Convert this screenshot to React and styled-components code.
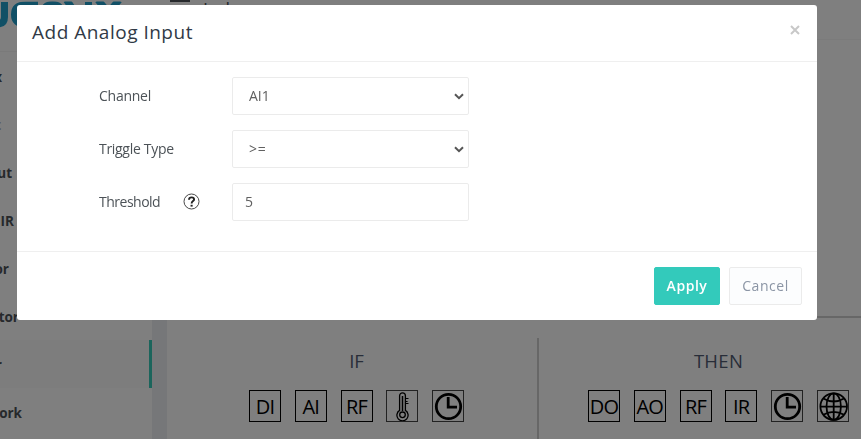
import React from "react";
import styled, { createGlobalStyle } from "styled-components";

const Global = createGlobalStyle`
  *, *::before, *::after { box-sizing: border-box; }
  body {
    margin: 0;
    overflow: hidden;
    background: #fff;
    color: #4c5257;
    font: 14px/20px "Open Sans", "Noto Sans", sans-serif;
  }
`;

const Shell = styled.div`
  display: grid;
  grid-template-columns: 152px 1fr;
  height: 439px;
  overflow: hidden;
`;
const Sidebar = styled.nav`
  display: flex;
  flex-direction: column;
  background: #fff;
`;
const Brand = styled.div`
  height: 52px;
  flex: none;
  border-bottom: 1px solid #f4f4f4;
  overflow: hidden;
  svg { display: block; }
`;
const MenuItem = styled.div`
  height: 48px;
  flex: none;
  display: flex;
  align-items: center;
  justify-content: flex-end;
  padding-top: 2px;
  padding-right: ${(p) => p.$inset}px;
  font-size: 13.5px;
  font-weight: 700;
  white-space: nowrap;
  color: ${(p) => (p.$soft ? "#adb1b6" : "#4d5258")};
  background: ${(p) => (p.$active ? "#fafafa" : "#fff")};
  border-right: 3px solid ${(p) => (p.$active ? "#36cbb8" : "transparent")};
`;
const Main = styled.main`
  display: flex;
  flex-direction: column;
  min-width: 0;
`;
const TopBar = styled.header`
  height: 40px;
  flex: none;
  border-bottom: 1px solid #f6f6f6;
  padding-left: 18px;
  display: flex;
  align-items: flex-start;
  gap: 13px;
`;
const Bar = styled.i`
  width: 20px;
  height: 2px;
  background: #4d5258;
`;
const PageTitle = styled.span`
  font-size: 18px;
  line-height: 24px;
  margin-top: -3px;
`;
const Content = styled.div`
  flex: 1;
  padding-left: 15px;
  background: #eceff2;
`;
const Card = styled.section`
  height: 100%;
  background: #fff;
  padding-top: 276px;
  border-bottom: 1px solid #f5eff2;
`;
const Panels = styled.div`
  display: grid;
  grid-template-columns: 370px 1fr;
  border-top: 2px solid #cfcfcf;
  padding-top: 20px;
`;
const Panel = styled.div`
  height: 110px;
  padding: 12px 0 0 ${(p) => p.$start}px;
  border-left: ${(p) => (p.$ruled ? "2px solid #cfcfcf" : "0")};
`;
const PanelTitle = styled.h3`
  margin: 0;
  width: ${(p) => p.$width}px;
  text-align: center;
  font-weight: 400;
  font-size: 18.5px;
  line-height: 22px;
  letter-spacing: ${(p) => p.$track || 0}px;
  color: #505b72;
`;
const Tiles = styled.div`
  display: flex;
  gap: 13.75px;
  margin-top: 18px;
`;
const Tile = styled.div`
  width: 32px;
  height: 32px;
  flex: none;
  display: flex;
  align-items: center;
  justify-content: center;
  padding-top: ${(p) => (p.$icon ? 0 : 2)}px;
  border: 1px solid ${(p) => (p.$icon ? "#444" : "#000")};
  color: #000;
  font: 500 20px/28px "Open Sans", "Noto Sans", sans-serif;
  letter-spacing: -0.8px;
  svg { display: block; flex: none; }
`;
const Backdrop = styled.div`
  position: fixed;
  inset: 0;
  background: rgba(0, 0, 0, 0.5);
`;
const Dialog = styled.div`
  position: absolute;
  left: 17px;
  top: 5px;
  width: 800px;
  height: 315px;
  display: flex;
  flex-direction: column;
  background: #fff;
  border-radius: 3px;
`;
const DialogHeader = styled.header`
  height: 57px;
  flex: none;
  display: flex;
  align-items: center;
  justify-content: space-between;
  padding: 0 17px 2px 15px;
  border-bottom: 1px solid #efefef;
`;
const DialogTitle = styled.h2`
  margin: 0;
  font-size: 19px;
  line-height: 26px;
  font-weight: 400;
  letter-spacing: 0.5px;
  color: #313a46;
`;
const Close = styled.button`
  border: 0;
  padding: 0;
  background: none;
  display: flex;
  margin-top: -4px;
`;
const Form = styled.div`
  flex: 1;
  display: flex;
  flex-direction: column;
  gap: 15px;
  padding: 15px 0 0 82px;
`;
const Field = styled.div`
  height: 38px;
  display: grid;
  grid-template-columns: 133px 237px;
  align-items: center;
`;
const Label = styled.label`
  display: flex;
  align-items: center;
  font-size: 14px;
  letter-spacing: ${(p) => p.$track || 0}px;
  color: #4c5257;
  svg { position: relative; top: -1px; margin-left: auto; margin-right: 32px; }
`;
const Control = styled.div`
  height: 38px;
  display: flex;
  align-items: center;
  justify-content: space-between;
  border: 1px solid #ebebeb;
  border-radius: 2px;
  padding: 0 4px 0 ${(p) => (p.$select ? 16 : 12)}px;
  font-size: 14px;
  color: #606060;
  letter-spacing: ${(p) => p.$track || 0}px;
`;
const DialogFooter = styled.footer`
  height: 69px;
  flex: none;
  display: flex;
  justify-content: flex-end;
  gap: 9px;
  padding: 15px 15px 0 0;
  border-top: 1px solid #efefef;
`;
const Button = styled.button`
  width: ${(p) => (p.$primary ? 66 : 73)}px;
  height: 38px;
  padding: 0;
  border-radius: 2px;
  border: 1px solid ${(p) => (p.$primary ? "#33cabb" : "#ebebeb")};
  background: ${(p) => (p.$primary ? "#33cabb" : "#fcfdfe")};
  color: ${(p) => (p.$primary ? "#fff" : "#8b95a5")};
  font: ${(p) => (p.$primary ? 600 : 400)} 14px/20px "Open Sans", "Noto Sans", sans-serif;
  letter-spacing: 0.55px;
`;

const Chevron = () => (
  <svg width="10" height="7" viewBox="0 0 10 7">
    <path d="M1 1.2 5 5.1 9 1.2" fill="none" stroke="#555" strokeWidth="2" />
  </svg>
);
const Clock = () => (
  <svg width="30" height="30" viewBox="0 0 30 30" fill="none" stroke="#000">
    <circle cx="15.5" cy="15.5" r="12.2" strokeWidth="2.8" />
    <path d="M15.2 6v10.2H24" strokeWidth="2.8" />
  </svg>
);
const Thermometer = () => (
  <svg width="30" height="30" viewBox="0 0 30 30" fill="none" stroke="#000" strokeWidth="1.3">
    <path d="M12.6 19.4V4.8a2.9 2.9 0 0 1 5.8 0v14.6a5.6 5.6 0 1 1-5.8 0Z" />
    <path d="M15.5 5v15" strokeWidth="1.5" />
    <circle cx="15.5" cy="23.8" r="2.8" />
    <path d="M19 7.5h2.5M19 10.5h1.6M19 12.5h2.5" strokeWidth="1" />
  </svg>
);
const Globe = () => (
  <svg width="30" height="30" viewBox="0 0 30 30" fill="none" stroke="#000" strokeWidth="1.8">
    <circle cx="15.7" cy="15.6" r="13.3" />
    <ellipse cx="15.7" cy="15.6" rx="7.2" ry="13.3" />
    <path d="M15.7 2.3v26.6M2.4 15.6H29M5.3 7.5q10.4 6 20.8 0M5.3 23.8q10.4-6 20.8 0" />
  </svg>
);
const Help = () => (
  <svg width="17" height="17" viewBox="0 0 17 17" fill="none" stroke="#333">
    <circle cx="8.5" cy="8.5" r="7.5" strokeWidth="0.9" />
    <path d="M6 6.8Q6.1 4.4 8.6 4.4T11.1 6.5C11.1 8.1 8.6 8.1 8.6 10.5" stroke="#222" strokeWidth="1.9" />
    <path d="M8.6 11.8v1.8" stroke="#222" strokeWidth="2.1" />
  </svg>
);
const Logo = () => (
  <svg width="125" height="30" viewBox="0 0 125 30" fill="none" stroke="#22a0cc" strokeWidth="7">
    <path d="M4.5 2v15q0 7-7 7M38 5H26Q14.5 5 14.5 14.5T26 24M43.500 15Q43.500 4.500 52.500 4.500T61.500 15M69 25V2M66.500 0 82 22M88.500 2v23M98 0l20 24M119 0 99 24" />
    <path d="M0 0h125v1.500H0z" fill="#fff" stroke="none" />
  </svg>
);

const menu = [
  { text: "x", inset: 147 },
  { text: "t", inset: 148, soft: true },
  { text: "Input", inset: 137 },
  { text: "RF & IR", inset: 135 },
  { text: "Sensor", inset: 140 },
  { text: "Monitor", inset: 130 },
  { text: "r", inset: 147, active: true },
  { text: "Network", inset: 127 },
];
const conditions = ["DI", "AI", "RF", Thermometer, Clock];
const actions = ["DO", "AO", "RF", "IR", Clock, Globe];

const TileRow = ({ items }) => (
  <Tiles>
    {items.map((Item, i) =>
      typeof Item === "string" ? <Tile key={i}>{Item}</Tile> : <Tile key={i} $icon><Item /></Tile>
    )}
  </Tiles>
);

export default function App() {
  return (
    <>
      <Global />
      <Shell>
        <Sidebar>
          <Brand><Logo /></Brand>
          {menu.map((m) => (
            <MenuItem key={m.text} $inset={m.inset} $soft={m.soft} $active={m.active}>{m.text}</MenuItem>
          ))}
        </Sidebar>
        <Main>
          <TopBar><Bar /><PageTitle>Ind</PageTitle></TopBar>
          <Content>
            <Card>
              <Panels>
                <Panel $start={82}>
                  <PanelTitle $width={215}>IF</PanelTitle>
                  <TileRow items={conditions} />
                </Panel>
                <Panel $start={49} $ruled>
                  <PanelTitle $width={261} $track={0.3}>THEN</PanelTitle>
                  <TileRow items={actions} />
                </Panel>
              </Panels>
            </Card>
          </Content>
        </Main>
      </Shell>
      <Backdrop>
        <Dialog role="dialog">
          <DialogHeader>
            <DialogTitle>Add Analog Input</DialogTitle>
            <Close aria-label="Close">
              <svg width="10" height="10" viewBox="0 0 10 10">
                <path d="M1 1l8 8M9 1 1 9" stroke="#c8c8c8" strokeWidth="2" />
              </svg>
            </Close>
          </DialogHeader>
          <Form>
            <Field><Label $track={-0.25}>Channel</Label><Control $select>AI1<Chevron /></Control></Field>
            <Field><Label $track={-0.3}>Triggle Type</Label><Control $select $track={0.8}>&gt;=<Chevron /></Control></Field>
            <Field><Label $track={-0.5}>Threshold<Help /></Label><Control>5</Control></Field>
          </Form>
          <DialogFooter>
            <Button $primary>Apply</Button>
            <Button>Cancel</Button>
          </DialogFooter>
        </Dialog>
      </Backdrop>
    </>
  );
}
